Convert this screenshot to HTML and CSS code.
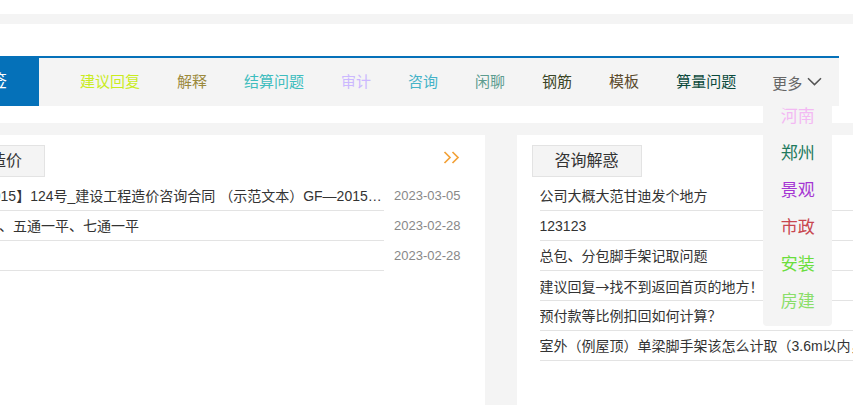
FILE: index.html
```html
<!DOCTYPE html>
<html lang="zh-CN">
<head>
<meta charset="utf-8">
<link rel="stylesheet" href="styles.css">
</head>
<body>
<div class="topband"></div>
<div class="header"></div>
<nav class="nav">
  <div class="nav-brand">标签</div>
  <ul class="nav-list">
    <li class="c1">建议回复</li>
    <li class="c2">解释</li>
    <li class="c3">结算问题</li>
    <li class="c4">审计</li>
    <li class="c5">咨询</li>
    <li class="c6">闲聊</li>
    <li class="c7">钢筋</li>
    <li class="c8">模板</li>
    <li class="c9">算量问题</li>
  </ul>
  <div class="more">
    <span>更多</span>
    <svg class="chev" width="15" height="9" viewBox="0 0 15 9"><path d="M1 1.2 L7.5 7.6 L14 1.2" fill="none" stroke="#555" stroke-width="1.5"/></svg>
    <ul class="dropdown">
      <li class="d1">河南</li>
      <li class="d2">郑州</li>
      <li class="d3">景观</li>
      <li class="d4">市政</li>
      <li class="d5">安装</li>
      <li class="d6">房建</li>
    </ul>
  </div>
</nav>
<div class="gap"></div>
<main class="main">
  <section class="panel">
    <div class="panel-head">
      <div class="tab">工程造价</div>
      <svg class="arrows" width="18" height="13" viewBox="0 0 18 13"><path d="M1.5 1 L7 6.5 L1.5 12 M9.5 1 L15 6.5 L9.5 12" fill="none" stroke="#f3a137" stroke-width="1.7"/></svg>
    </div>
    <ul class="list">
      <li class="row"><span class="title">建标【2015】124号_建设工程造价咨询合同 （示范文本）GF—2015—0212</span><span class="date">2023-03-05</span></li>
      <li class="row"><span class="title">三通一平、五通一平、七通一平</span><span class="date">2023-02-28</span></li>
      <li class="row"><span class="title">测试</span><span class="date">2023-02-28</span></li>
    </ul>
  </section>
  <section class="panel">
    <div class="panel-head">
      <div class="tab">咨询解惑</div>
    </div>
    <ul class="list">
      <li class="row"><span class="title">公司大概大范甘迪发个地方</span><span class="date">2023-03-05</span></li>
      <li class="row"><span class="title">123123</span><span class="date">2023-03-01</span></li>
      <li class="row"><span class="title">总包、分包脚手架记取问题</span><span class="date">2023-02-28</span></li>
      <li class="row"><span class="title">建议回复<span class="cjk">→</span>找不到返回首页的地方！</span><span class="date">2023-02-28</span></li>
      <li class="row"><span class="title">预付款等比例扣回如何计算？</span><span class="date">2023-02-28</span></li>
      <li class="row"><span class="title">室外（例屋顶）单梁脚手架该怎么计取（3.6m以内，3.6m以上）</span><span class="date">2023-02-28</span></li>
    </ul>
  </section>
</main>
</body>
</html>
```

FILE: styles.css
```css
* { box-sizing: border-box; }
html, body { margin: 0; padding: 0; }
body {
  background: #fff;
  font-family: "Liberation Sans", "Noto Sans CJK SC", sans-serif;
  color: #333;
  overflow: hidden;
  width: 853px;
  height: 405px;
}
ul { list-style: none; margin: 0; padding: 0; }

.topband { margin-top: 14px; height: 10px; background: #f4f4f4; }
.header { height: 32px; background: #fff; }

.nav {
  display: flex;
  align-items: center;
  margin-left: -81px;
  width: 920px;
  height: 50px;
  border-top: 2px solid #0571b9;
  background: #f4f4f4;
  position: relative;
  z-index: 5;
}
.nav-brand {
  align-self: flex-start;
  width: 120px;
  height: 50px;
  margin-top: -2px;
  padding-top: 2px;
  padding-right: 32px;
  background: #0571b9;
  color: #fff;
  font-size: 17px;
  line-height: 48px;
  text-align: right;
}
.nav-list {
  display: flex;
  gap: 37px;
  margin-left: 41px;
  font-size: 15px;
  line-height: 48px;
}
.c1 { color: #c9ec1f; }
.c2 { color: #9c8a3c; }
.c3 { color: #3fbdbe; }
.c4 { color: #cbb8ff; }
.c5 { color: #45b3c8; }
.c6 { color: #5d9c8f; }
.c7 { color: #3b4526; }
.c8 { color: #5b4a2c; }
.c9 { color: #0b4a3c; }

.more {
  position: relative;
  display: flex;
  align-items: center;
  gap: 5px;
  margin-left: 27px;
  padding: 0 10px 0 9px;
  width: 69px;
  height: 48px;
  font-size: 15px;
  color: #666;
}
.chev { margin-top: -1px; }
.dropdown {
  position: absolute;
  left: 0;
  top: 40px;
  width: 69px;
  background: #f4f4f4;
  border-radius: 0 0 4px 4px;
  padding-bottom: 6px;
  font-size: 17px;
  text-align: center;
}
.dropdown li { height: 37px; line-height: 37px; }
.d1 { color: #f3b9f3; }
.d2 { color: #1e7a5e; }
.d3 { color: #a535d3; }
.d4 { color: #c8464f; }
.d5 { color: #6ade3c; }
.d6 { color: #8ade6a; }

.gap { height: 17px; }

.main {
  display: flex;
  gap: 32px;
  margin-left: -80px;
  padding-top: 12px;
  background: #f4f4f4;
  height: 300px;
}
.panel {
  flex: 0 0 564px;
  background: #fff;
  padding: 10px 24px 0 23px;
}
.panel-head {
  display: flex;
  justify-content: space-between;
  align-items: flex-start;
  margin-left: -8px;
  height: 36px;
}
.tab {
  width: 110px;
  height: 32px;
  line-height: 30px;
  border: 1px solid #e3e3e3;
  background: #f4f4f4;
  font-size: 16px;
  text-align: center;
  color: #333;
}
.arrows { margin-top: 6px; }
.row {
  display: flex;
  height: 30px;
}
.title {
  flex: 0 0 441px;
  width: 441px;
  font-size: 14px;
  line-height: 30px;
  border-bottom: 1px solid #e3e3e3;
  white-space: nowrap;
  overflow: hidden;
  text-overflow: ellipsis;
  color: #333;
}
.cjk { font-family: "Noto Sans CJK SC", sans-serif; }
.date {
  margin-left: 10px;
  font-size: 13px;
  line-height: 30px;
  color: #888;
  white-space: nowrap;
}
```
